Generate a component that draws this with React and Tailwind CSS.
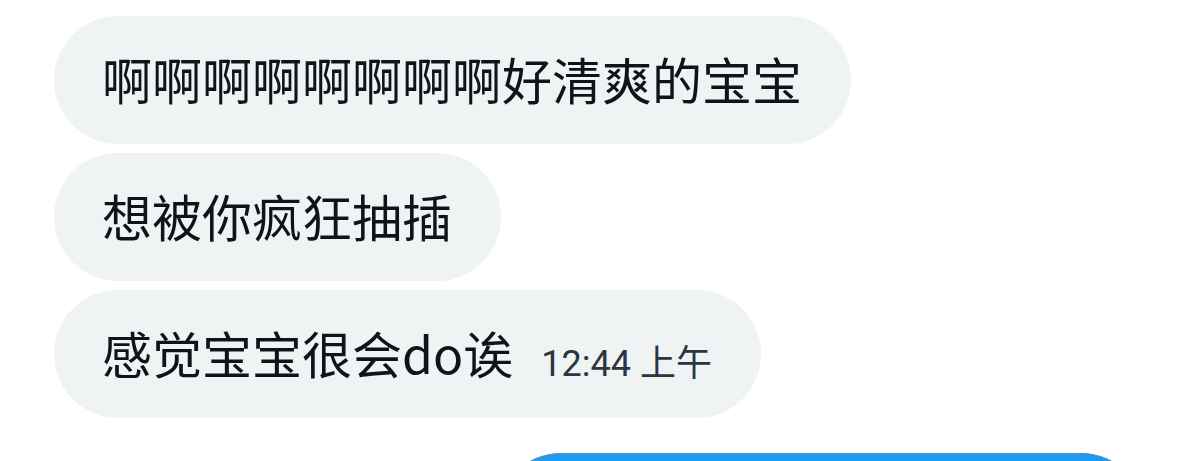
const messages = [
  { id: 1, text: '啊啊啊啊啊啊啊啊好清爽的宝宝' },
  { id: 2, text: '想被你疯狂抽插' },
  { id: 3, text: '感觉宝宝很会do诶', time: '12:44 上午' },
];

function Message({ text, time }) {
  return (
    <li className="flex max-w-full items-end gap-7 rounded-[64px] bg-[#eff3f4] pt-[26px] pr-[49px] pb-[30px] pl-12 text-[50px] leading-[72px] text-[#0f1419]">
      <p>{text}</p>
      {time && (
        <time
          dateTime="00:44"
          className="font-['Roboto','Noto_Sans_CJK_SC',sans-serif] text-[36px] leading-[48px] whitespace-nowrap text-[#2b3640]"
        >
          {time}
        </time>
      )}
    </li>
  );
}

export default function App() {
  return (
    <main className="h-screen overflow-hidden bg-white px-[54px] pt-4 font-['Noto_Sans_CJK_SC',sans-serif]">
      {/* Received */}
      <ul className="flex flex-col items-start gap-[9px]">
        {messages.map((m) => (
          <Message key={m.id} text={m.text} time={m.time} />
        ))}
      </ul>

      {/* Sent, continues below the fold */}
      <div className="mt-[35px] ml-auto h-32 w-[648px] max-w-full rounded-[64px] border-t border-[#4c8fc0] bg-[#1d9bf0]" />
    </main>
  );
}
